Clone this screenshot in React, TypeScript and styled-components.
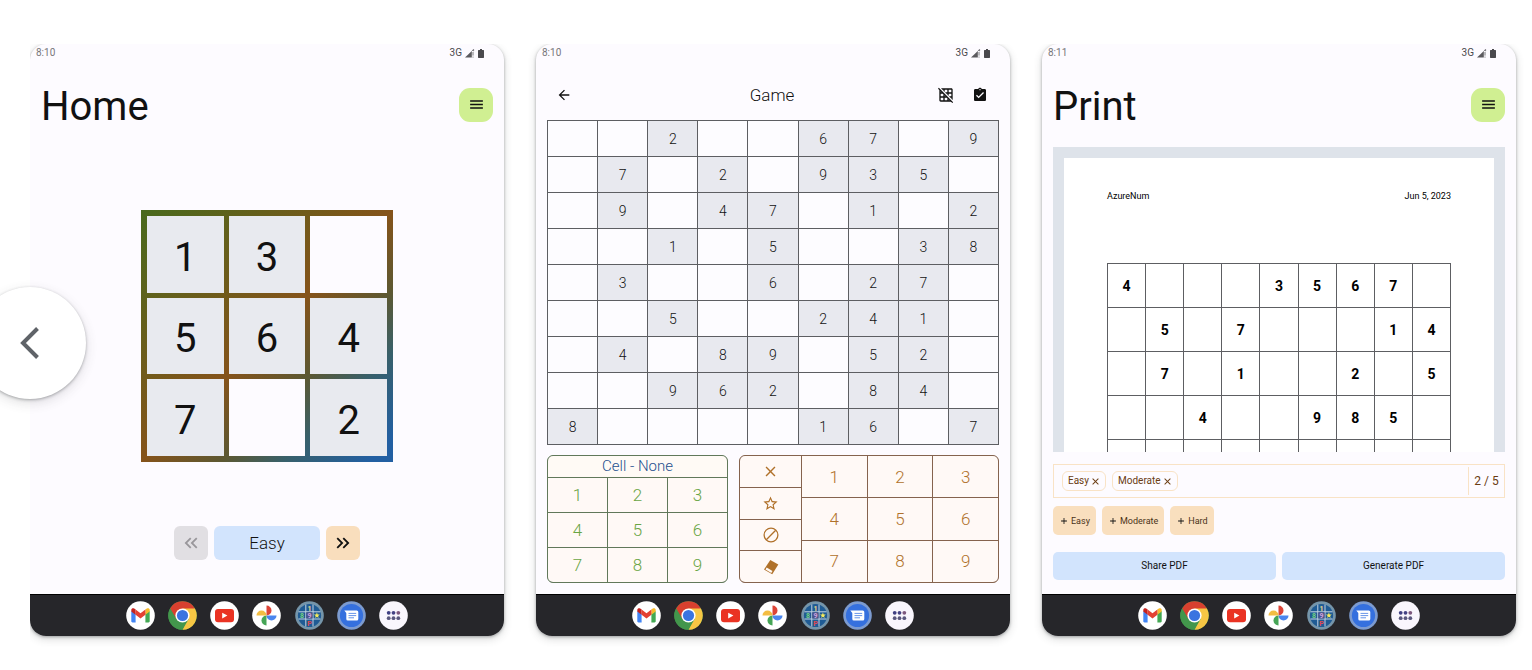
import React from "react";
import styled, { createGlobalStyle } from "styled-components";
import {
  MdAdd,
  MdArrowBack,
  MdAssignmentTurnedIn,
  MdClose,
  MdGridOff,
  MdKeyboardDoubleArrowLeft,
  MdKeyboardDoubleArrowRight,
  MdMenu,
  MdStarOutline,
} from "react-icons/md";

const GlobalStyle = createGlobalStyle`
  *, *::before, *::after { box-sizing: border-box; }
  body { margin: 0; background: #fff; font-family: Roboto, "Liberation Sans", sans-serif; color: #111; }
  button { font: inherit; color: inherit; border: 0; padding: 0; background: none; cursor: pointer; }
  h1, h2, p { margin: 0; font-weight: 400; }
  svg { display: block; flex: none; }
`;

/* ---------- carousel ---------- */

const Carousel = styled.main`
  position: relative;
  padding: 44px 0 0 30px;
`;

const Track = styled.div`
  display: grid;
  grid-template-columns: repeat(3, minmax(0, 1fr));
  gap: 32px;
  padding: 0 16px 16px 0;
  overflow: hidden;
`;

const PrevButton = styled.button`
  position: absolute;
  left: -26px;
  top: 287px;
  width: 112px;
  height: 112px;
  border-radius: 50%;
  background: #fff;
  box-shadow: 0 1px 3px rgba(60, 64, 67, 0.4), 0 4px 12px rgba(60, 64, 67, 0.16);
  display: grid;
  place-items: center;
`;

const Screen = styled.section`
  display: flex;
  flex-direction: column;
  border-radius: 16px;
  background: #fdfbff;
  overflow: hidden;
  box-shadow: 0 1px 3px rgba(60, 64, 67, 0.4), 0 3px 8px rgba(60, 64, 67, 0.2);
`;

const Body = styled.div`
  flex: 1;
  display: flex;
  flex-direction: column;
  padding: 0 11px;
`;

/* ---------- status bar and dock ---------- */

const StatusRow = styled.div`
  display: flex;
  align-items: center;
  height: 18px;
  padding: 0 20px 0 6px;
  font-size: 10px;
  line-height: 18px;
  color: #77767a;
`;

const StatusIcons = styled.span`
  display: flex;
  align-items: center;
  gap: 3px;
  margin-left: auto;
  color: #4a494d;
`;

const DockBar = styled.nav`
  display: flex;
  justify-content: center;
  align-items: center;
  height: 42px;
  background: #26262a;
  border-top: 1px solid #000;
`;

const DockList = styled.div`
  display: flex;
  justify-content: space-between;
  width: 283px;
`;

const DockButton = styled.button`
  width: 29px;
  height: 29px;
  border-radius: 50%;
`;

/* ---------- shared headings ---------- */

const Header = styled.header`
  display: flex;
  align-items: center;
  justify-content: space-between;
  height: 85px;
`;

const Title = styled.h1`
  padding-top: 5px;
  font-size: 40px;
  line-height: 48px;
`;

const MenuButton = styled.button`
  display: grid;
  place-items: center;
  width: 34px;
  height: 34px;
  border-radius: 11px;
  background: #d0ef92;
`;

/* ---------- home ---------- */

const HomeContent = styled.div`
  flex: 1;
  display: flex;
  flex-direction: column;
  align-items: center;
  justify-content: space-between;
  padding: 63px 0 34px;
`;

const Board = styled.div`
  display: grid;
  grid-template-columns: repeat(3, 1fr);
  grid-auto-rows: 1fr;
  gap: 5px;
  width: 252px;
  aspect-ratio: 1;
  padding: 6px;
  background: linear-gradient(135deg, #486a1c, #85531a 50%, #5c5832 66%, #38606a 78%, #225fa2 95%);
`;

const BoardCell = styled.div<{ $filled: boolean }>`
  display: grid;
  place-items: center;
  padding-top: 7px;
  font-size: 40px;
  line-height: 48px;
  background: ${(p) => (p.$filled ? "#e8eaef" : "#fdfbff")};
`;

const LevelRow = styled.div`
  display: flex;
  gap: 6px;
`;

const LevelButton = styled.button<{ $tone: string; $wide?: boolean }>`
  display: grid;
  place-items: center;
  width: ${(p) => (p.$wide ? 106 : 34)}px;
  height: 34px;
  border-radius: 6px;
  background: ${(p) => p.$tone};
  font-size: 17px;
  font-weight: 300;
  line-height: 20px;
  &:disabled { color: #99979b; }
`;

/* ---------- game ---------- */

const AppBar = styled.header`
  display: grid;
  grid-template-columns: 1fr auto 1fr;
  align-items: center;
  height: 58px;
  padding: 8px 22px 0 20px;
`;

const BarTitle = styled.h1`
  font-size: 17px;
  font-weight: 300;
  line-height: 20px;
`;

const BarActions = styled.div`
  display: flex;
  justify-content: flex-end;
  gap: 18px;
`;

const Sudoku = styled.table<{ $row: number }>`
  width: 100%;
  table-layout: fixed;
  border-collapse: collapse;
  border: 1px solid #5d5e62;
  td {
    height: ${(p) => p.$row}px;
    padding: 0;
    border: 1px solid #5d5e62;
    text-align: center;
    font-size: 14px;
    line-height: 16px;
  }
`;

const GameCell = styled.td<{ $given: boolean }>`
  background: ${(p) => (p.$given ? "#e8e9ef" : "#fdfcff")};
  font-weight: 300;
`;

const PrintCell = styled.td`
  font-weight: 700;
  color: #000;
`;

const Pads = styled.div`
  display: grid;
  grid-template-columns: 181fr 260fr;
  gap: 11px;
  height: 128px;
  margin: 10px 0 11px;
`;

const Pad = styled.div<{ $line: string; $split?: boolean }>`
  --line: ${(p) => p.$line};
  display: grid;
  grid-template-columns: ${(p) => (p.$split ? "61px 1fr" : "1fr")};
  grid-template-rows: ${(p) => (p.$split ? "1fr" : "21px 1fr")};
  gap: 1px;
  border: 1px solid var(--line);
  border-radius: 6px;
  background: var(--line);
  overflow: hidden;
`;

const PadHeading = styled.h2`
  background: #fffaf5;
  color: #25508f;
  text-align: center;
  font-size: 15px;
  font-weight: 300;
  line-height: 21px;
`;

const Keys = styled.div<{ $columns: number }>`
  display: grid;
  grid-template-columns: repeat(${(p) => p.$columns}, 1fr);
  grid-auto-rows: 1fr;
  gap: 1px;
`;

const Key = styled.button<{ $ink: string }>`
  display: grid;
  place-items: center;
  background: #fff9f6;
  color: ${(p) => p.$ink};
  font-size: 17px;
  font-weight: 300;
  line-height: 20px;
`;

/* ---------- print ---------- */

const Preview = styled.div`
  height: 305px;
  padding: 11px 11px 0;
  background: #dee3ea;
  overflow: hidden;
`;

const Paper = styled.article`
  padding: 32px 43px;
  background: #fff;
`;

const PaperHead = styled.div`
  display: flex;
  justify-content: space-between;
  margin-bottom: 61px;
  font-size: 9px;
  line-height: 12px;
  color: #000;
`;

const Selection = styled.div`
  display: flex;
  align-items: center;
  gap: 6px;
  height: 34px;
  margin: 12px 0 8px;
  padding: 0 0 0 8px;
  border: 1px solid #f9e3c6;
  color: #6a3c12;
`;

const Chip = styled.button`
  display: flex;
  align-items: center;
  gap: 1px;
  height: 20px;
  padding: 0 4px 0 5px;
  border: 1px solid #f9e3c6;
  border-radius: 6px;
  font-size: 10px;
  line-height: 12px;
`;

const Count = styled.p`
  margin-left: auto;
  width: 36px;
  border-left: 1px solid #f9e3c6;
  text-align: center;
  font-size: 12px;
  line-height: 28px;
`;

const AddRow = styled.div`
  display: flex;
  gap: 6px;
  margin-bottom: 17px;
`;

const AddButton = styled.button`
  display: flex;
  align-items: center;
  gap: 2px;
  height: 29px;
  padding: 0 6px;
  border-radius: 5px;
  background: #f9dfbe;
  color: #4a3319;
  font-size: 9px;
  line-height: 12px;
  svg { color: #111; }
`;

const PdfRow = styled.div`
  display: grid;
  grid-template-columns: 1fr 1fr;
  gap: 6px;
  margin-bottom: 14px;
`;

const PdfButton = styled.button`
  height: 28px;
  border-radius: 5px;
  background: #d2e4fd;
  font-size: 10px;
  line-height: 12px;
`;

/* ---------- drawings ---------- */

const Disc = ({ fill = "#fff" }: { fill?: string }) => <circle cx="14.5" cy="14.5" r="14.3" fill={fill} />;

const dockIcons: { name: string; art: React.ReactNode }[] = [
  {
    name: "Gmail",
    art: (
      <>
        <Disc />
        <path d="M5.3 10v10.2c0 .7.5 1.2 1.2 1.2h3.1v-8.8z" fill="#4285f4" />
        <path d="M23.7 10v10.2c0 .7-.5 1.2-1.2 1.2h-3.1v-8.8z" fill="#43a853" />
        <path d="M19.4 8.6v5.2l4.3-3.2V9c0-1.8-1.8-2.3-2.9-1.5z" fill="#f6bb2a" />
        <path d="M9.6 8.6v5.2l-4.3-3.2V9c0-1.8 1.8-2.3 2.9-1.5z" fill="#c5221f" />
        <path d="M9.6 13.8V8.6l4.9 3.7 4.9-3.7v5.2l-4.9 3.7z" fill="#e34133" />
      </>
    ),
  },
  {
    name: "Chrome",
    art: (
      <>
        <Disc fill="#43964c" />
        <path d="M14.5 14.5 2.1 7.4A14.3 14.3 0 0 1 26.9 7.4z" fill="#d8402f" />
        <path d="M14.5 7.4h12.4A14.3 14.3 0 0 1 14.5 28.8l6.2-10.7z" fill="#f7c644" />
        <path d="M2.1 7.4 8.3 18.1l6.2-3.6V7.4z" fill="#d8402f" />
        <path d="M2.1 7.4 8.3 18.1l4 2.6 6-1-3.8 9.1A14.3 14.3 0 0 1 2.1 7.4z" fill="#43964c" />
        <circle cx="14.5" cy="14.5" r="7.1" fill="#fff" />
        <circle cx="14.5" cy="14.5" r="5.6" fill="#3a74e0" />
      </>
    ),
  },
  {
    name: "YouTube",
    art: (
      <>
        <Disc />
        <rect x="5" y="8" width="19" height="13.2" rx="3" fill="#ea3323" />
        <path d="m12.2 11.8 5.2 2.8-5.2 2.8z" fill="#fff" />
      </>
    ),
  },
  {
    name: "Photos",
    art: (
      <>
        <Disc />
        <path d="M14.5 4.5a5 5 0 0 1 0 10z" fill="#dc4437" />
        <path d="M24.5 14.5a5 5 0 0 1-10 0z" fill="#4a86ee" />
        <path d="M14.5 24.5a5 5 0 0 1 0-10z" fill="#46a556" />
        <path d="M4.5 14.5a5 5 0 0 1 10 0z" fill="#f3bd42" />
      </>
    ),
  },
  {
    name: "AzureNum",
    art: (
      <>
        <Disc fill="#7595aa" />
        <circle cx="14.5" cy="14.5" r="11.6" fill="#1f5b94" />
        <path d="M10.8 3.5v22M18 3.5v22M3.5 10.8h22M3.5 18h22" stroke="#c3d3e3" strokeWidth="1" />
        <rect x="11.3" y="11.3" width="6.2" height="6.2" fill="#4b5388" />
        <g fontSize="7" fontWeight="700" textAnchor="middle">
          <text x="14.5" y="9.5" fill="#f0d98a">1</text>
          <text x="7" y="17" fill="#74d283">8</text>
          <text x="14.5" y="17" fill="#d0a4e0">9</text>
          <text x="14.5" y="24.5" fill="#e04a4e">P</text>
        </g>
        <path d="m21.9 11.6.8 2h2.1l-1.7 1.3.6 2.1-1.8-1.2-1.8 1.2.6-2.1-1.7-1.3h2.1z" fill="#f7ec5c" />
      </>
    ),
  },
  {
    name: "Messages",
    art: (
      <>
        <Disc fill="#7c9bd0" />
        <circle cx="14.5" cy="14.5" r="11.6" fill="#3570de" />
        <path d="M7.3 9.4h12.5a1.5 1.5 0 0 1 1.5 1.5v7.2a1.5 1.5 0 0 1-1.5 1.5h-9a1.5 1.5 0 0 1-1.5-1.5v-6z" fill="#fff" />
        <path d="M11.5 12.4h7.7M11.5 14.6h7.7M11.5 16.8h5.5" stroke="#6794e8" strokeWidth="1" />
      </>
    ),
  },
  {
    name: "All apps",
    art: (
      <>
        <Disc fill="#f9f6fd" />
        <g fill="#59577e">
          <circle cx="9.7" cy="11.8" r="1.9" fill="#3f3f83" />
          <circle cx="14.5" cy="11.8" r="1.9" fill="#444284" />
          <circle cx="19.3" cy="11.8" r="1.9" fill="#7d587e" />
          <circle cx="9.7" cy="17.2" r="1.9" />
          <circle cx="14.5" cy="17.2" r="1.9" />
          <circle cx="19.3" cy="17.2" r="1.9" />
        </g>
      </>
    ),
  },
];

const SignalIcon = () => (
  <svg width="10" height="9" viewBox="0 0 10 9" aria-hidden="true">
    <path d="M0 8.6 6.8 2v6.6z" fill="#5b5a5e" />
    <path d="M6.8 2 8.6.4v1.8M8 3v3.6M8 7.6v1" stroke="#77767a" strokeWidth="1" fill="none" />
  </svg>
);

const BatteryIcon = () => (
  <svg width="6" height="9" viewBox="0 0 6 9" aria-hidden="true">
    <path d="M2 0h2v1h1.4c.3 0 .6.2.6.5v7c0 .3-.3.5-.6.5H.6C.3 9 0 8.8 0 8.5v-7C0 1.2.3 1 .6 1H2z" fill="#4a494d" />
  </svg>
);

const NoneIcon = () => (
  <svg width="16" height="16" viewBox="0 0 16 16" fill="none" stroke="currentColor" strokeWidth="1.3" aria-hidden="true">
    <circle cx="8" cy="8" r="6.9" />
    <path d="m3.3 12.7 9.4-9.4" />
  </svg>
);

const EraserIcon = () => (
  <svg width="16" height="16" viewBox="0 0 16 16" aria-hidden="true">
    <path d="M7.3 1 15.3 5.6 9.2 15.2 1 10.4z" fill="currentColor" />
    <path d="m2.5 10.5 1.2-1.9 5.8 3.4-1.2 1.9z" fill="#fff9f6" />
  </svg>
);

/* ---------- parts ---------- */

const StatusBar = ({ time }: { time: string }) => (
  <StatusRow>
    <span>{time}</span>
    <StatusIcons>
      3G
      <SignalIcon />
      <BatteryIcon />
    </StatusIcons>
  </StatusRow>
);

const Dock = () => (
  <DockBar aria-label="Apps">
    <DockList>
      {dockIcons.map((icon) => (
        <DockButton key={icon.name} type="button" aria-label={icon.name}>
          <svg width="29" height="29" viewBox="0 0 29 29">{icon.art}</svg>
        </DockButton>
      ))}
    </DockList>
  </DockBar>
);

const PageHeader = ({ title }: { title: string }) => (
  <Header>
    <Title>{title}</Title>
    <MenuButton type="button" aria-label="Menu">
      <MdMenu size={17} />
    </MenuButton>
  </Header>
);

const toRows = (rows: string[]) => rows.map((row) => row.split("").map((c) => (c === "." ? "" : c)));

const homeBoard = toRows(["13.", "564", "7.2"]).flat();

const gameRows = toRows([
  "..2..67.9",
  ".7.2.935.",
  ".9.47.1.2",
  "..1.5..38",
  ".3..6.27.",
  "..5..241.",
  ".4.89.52.",
  "..962.84.",
  "8....16.7",
]);

const printRows = toRows(["4...3567.", ".5.7...14", ".7.1..2.5", "..4..985.", "........."]);

const digits = ["1", "2", "3", "4", "5", "6", "7", "8", "9"];

const tools = [
  { name: "Clear", icon: <MdClose size={17} /> },
  { name: "Star", icon: <MdStarOutline size={17} /> },
  { name: "None", icon: <NoneIcon /> },
  { name: "Erase", icon: <EraserIcon /> },
];

const HomeScreen = () => (
  <Screen>
    <StatusBar time="8:10" />
    <Body>
      <PageHeader title="Home" />
      <HomeContent>
        <Board>
          {homeBoard.map((value, i) => (
            <BoardCell key={i} $filled={value !== ""}>{value}</BoardCell>
          ))}
        </Board>
        <LevelRow>
          <LevelButton type="button" $tone="#e1dfe3" disabled aria-label="Easier">
            <MdKeyboardDoubleArrowLeft size={22} />
          </LevelButton>
          <LevelButton type="button" $tone="#d2e4fd" $wide>Easy</LevelButton>
          <LevelButton type="button" $tone="#f9debd" aria-label="Harder">
            <MdKeyboardDoubleArrowRight size={22} />
          </LevelButton>
        </LevelRow>
      </HomeContent>
    </Body>
    <Dock />
  </Screen>
);

const IconButton = styled.button`
  display: grid;
  place-items: center;
  width: 16px;
  height: 18px;
`;

const GameBar = () => (
  <AppBar>
    <IconButton type="button" aria-label="Back">
      <MdArrowBack size={16} />
    </IconButton>
    <BarTitle>Game</BarTitle>
    <BarActions>
      <IconButton type="button" aria-label="Hide grid">
        <MdGridOff size={16} />
      </IconButton>
      <IconButton type="button" aria-label="Check">
        <MdAssignmentTurnedIn size={16} />
      </IconButton>
    </BarActions>
  </AppBar>
);

const GameScreen = () => (
  <Screen>
    <StatusBar time="8:10" />
    <GameBar />
    <Body>
      <Sudoku $row={36}>
        <tbody>
          {gameRows.map((row, r) => (
            <tr key={r}>
              {row.map((value, c) => (
                <GameCell key={c} $given={value !== ""}>{value}</GameCell>
              ))}
            </tr>
          ))}
        </tbody>
      </Sudoku>
      <Pads>
        <Pad $line="#61785a">
          <PadHeading>Cell - None</PadHeading>
          <Keys $columns={3}>
            {digits.map((d) => (
              <Key key={d} type="button" $ink="#69a544">{d}</Key>
            ))}
          </Keys>
        </Pad>
        <Pad $line="#85634e" $split>
          <Keys $columns={1}>
            {tools.map((tool) => (
              <Key key={tool.name} type="button" $ink="#b0712a" aria-label={tool.name}>{tool.icon}</Key>
            ))}
          </Keys>
          <Keys $columns={3}>
            {digits.map((d) => (
              <Key key={d} type="button" $ink="#b0712a">{d}</Key>
            ))}
          </Keys>
        </Pad>
      </Pads>
    </Body>
    <Dock />
  </Screen>
);

const PrintScreen = () => (
  <Screen>
    <StatusBar time="8:11" />
    <Body>
      <PageHeader title="Print" />
      <Preview>
        <Paper>
          <PaperHead>
            <span>AzureNum</span>
            <span>Jun 5, 2023</span>
          </PaperHead>
          <Sudoku $row={44}>
            <tbody>
              {printRows.map((row, r) => (
                <tr key={r}>
                  {row.map((value, c) => (
                    <PrintCell key={c}>{value}</PrintCell>
                  ))}
                </tr>
              ))}
            </tbody>
          </Sudoku>
        </Paper>
      </Preview>
      <Selection>
        {["Easy", "Moderate"].map((level) => (
          <Chip key={level} type="button">
            {level}
            <MdClose size={11} />
          </Chip>
        ))}
        <Count>2 / 5</Count>
      </Selection>
      <AddRow>
        {["Easy", "Moderate", "Hard"].map((level) => (
          <AddButton key={level} type="button">
            <MdAdd size={10} />
            {level}
          </AddButton>
        ))}
      </AddRow>
      <PdfRow>
        <PdfButton type="button">Share PDF</PdfButton>
        <PdfButton type="button">Generate PDF</PdfButton>
      </PdfRow>
    </Body>
    <Dock />
  </Screen>
);

export default function App() {
  return (
    <>
      <GlobalStyle />
      <Carousel>
        <Track>
          <HomeScreen />
          <GameScreen />
          <PrintScreen />
        </Track>
        <PrevButton type="button" aria-label="Previous">
          <svg width="20" height="34" viewBox="0 0 20 34" fill="none" stroke="#5f6368" strokeWidth="4" aria-hidden="true">
            <path d="M17.5 2.5 3 17l14.500 14.500" />
          </svg>
        </PrevButton>
      </Carousel>
    </>
  );
}
